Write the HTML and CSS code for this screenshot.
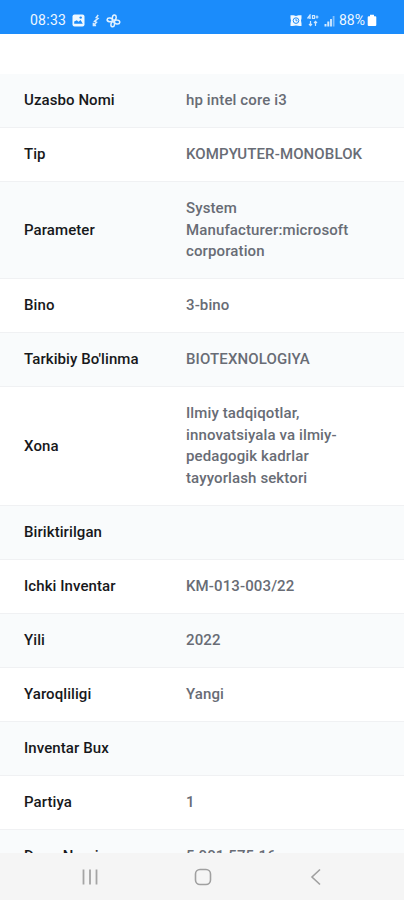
FILE: index.html
```html
<!DOCTYPE html>
<html lang="uz">
<head>
<meta charset="utf-8">
<meta name="viewport" content="width=device-width, initial-scale=1">
<title>Inventar</title>
<link rel="stylesheet" href="styles.css">
</head>
<body>
<div class="screen">
  <header class="status">
    <div class="status-left">
      <span class="clock">08:33</span>
      <svg class="ic-image" width="13" height="13" viewBox="0 0 13 13"><rect x=".5" y=".5" width="12" height="12" rx="2" fill="#eef8ff"/><path d="M2.200 9.800V7.500L4.800 6.200 6.500 7.800 8.500 6 10.800 9.800Z" fill="#1b8cfb"/><circle cx="8.700" cy="3.600" r="1.200" fill="#1b8cfb"/></svg>
      <svg class="ic-bolt" width="8" height="13" viewBox="0 0 8 13"><path d="M6.200 1 4.200 3.600 6 4.400 2.500 7.300 4.500 8.300 1.500 11.500M1.400 8.800v2.800h2.700" fill="none" stroke="#d7ecff" stroke-width="1.500"/></svg>
      <svg class="ic-fan" width="15" height="14" viewBox="0 0 15 14"><g fill="none" stroke="#e3f2ff" stroke-width="1.500" transform="rotate(8 7.500 7)"><ellipse cx="7.800" cy="3.600" rx="1.900" ry="2.600"/><ellipse cx="11.200" cy="7.500" rx="2.700" ry="1.900"/><ellipse cx="7.200" cy="10.400" rx="1.800" ry="2.500"/><ellipse cx="3.700" cy="6.400" rx="2.700" ry="1.800"/></g></svg>
    </div>
    <div class="status-right">
      <svg class="ic-alarm" width="12" height="13" viewBox="0 0 12 13"><path d="M.5 1.200h3L6 2l2.500-.8h3v3L11 6.500l.5 3v2.500h-2L6 11.500l-3.500.5h-2V9.500l.5-3-.5-2.300Z" fill="#f0f8ff"/><circle cx="6" cy="6.600" r="2.800" fill="none" stroke="#1b8cfb"/><path d="M6 4.800v2h1.500" fill="none" stroke="#1b8cfb" stroke-width=".9"/></svg>
      <svg class="ic-lte" width="12" height="13" viewBox="0 0 12 13" fill="none" stroke="#cfe8ff" stroke-width="1.200"><path d="M3 5V1L.8 4h3M5.500 1v4M5.500 1.500h2v3h-2M8.500 3h3M10 1.500v3M3.500 7v4.500M2 10l1.500 1.700L5 10M8.500 12V7.500M7 9l1.500-1.700L10 9"/></svg>
      <svg class="ic-signal" width="11" height="12" viewBox="0 0 11 12"><path d="M.5 9h2v2.500h-2zM3.300 6.500h2v5h-2zM6.100 4h1.800v7.500H6.100z" fill="#d5ebff"/><path d="M8.700 1h1.800v10.500H8.700z" fill="#80bffc"/></svg>
      <span class="percent">88%</span>
      <svg class="ic-battery" width="10" height="13" viewBox="0 0 10 13"><path d="M3 .8h4v1.400h1.300a1 1 0 0 1 1 1V11a1 1 0 0 1-1 1H1.700a1 1 0 0 1-1-1V3.200a1 1 0 0 1 1-1H3Z" fill="#fff"/></svg>
    </div>
  </header>
  <main class="content">
    <dl class="details">
      <div class="row"><dt>Uzasbo Nomi</dt><dd>hp intel core i3</dd></div>
      <div class="row"><dt>Tip</dt><dd>KOMPYUTER-MONOBLOK</dd></div>
      <div class="row"><dt>Parameter</dt><dd>System<br>Manufacturer:microsoft<br>corporation</dd></div>
      <div class="row"><dt>Bino</dt><dd>3-bino</dd></div>
      <div class="row"><dt>Tarkibiy Bo'linma</dt><dd>BIOTEXNOLOGIYA</dd></div>
      <div class="row"><dt>Xona</dt><dd>Ilmiy tadqiqotlar,<br>innovatsiyala va ilmiy-<br>pedagogik kadrlar<br>tayyorlash sektori</dd></div>
      <div class="row"><dt>Biriktirilgan</dt><dd></dd></div>
      <div class="row"><dt>Ichki Inventar</dt><dd>KM-013-003/22</dd></div>
      <div class="row"><dt>Yili</dt><dd>2022</dd></div>
      <div class="row"><dt>Yaroqliligi</dt><dd>Yangi</dd></div>
      <div class="row"><dt>Inventar Bux</dt><dd></dd></div>
      <div class="row"><dt>Partiya</dt><dd>1</dd></div>
      <div class="row"><dt>Dona Narxi</dt><dd>5 001 575.16</dd></div>
    </dl>
  </main>
  <nav class="navbar">
    <svg width="18" height="18" viewBox="0 0 18 18"><path d="M2.500 1.500v15M9 1.500v15M15.500 1.500v15" stroke="#a5a5a5" stroke-width="1.800"/></svg>
    <svg width="18" height="18" viewBox="0 0 18 18"><rect x="1.500" y="1.500" width="15" height="15" rx="4.500" fill="none" stroke="#a0a0a0" stroke-width="1.600"/></svg>
    <svg width="18" height="18" viewBox="0 0 18 18"><path d="M13 1.500 5 9l8 7.500" fill="none" stroke="#a0a0a0" stroke-width="1.600"/></svg>
  </nav>
</div>
</body>
</html>
```
FILE: styles.css
```css
* { box-sizing: border-box; }
body { margin: 0; background: #fff; font-family: Roboto, "Liberation Sans", sans-serif; }
.screen { height: 900px; display: flex; flex-direction: column; overflow: hidden; }

.status {
  flex: none;
  height: 34px;
  padding: 7px 27px 0 30px;
  display: flex;
  justify-content: space-between;
  background: #1b8cfb;
  color: #eef7ff;
  font-size: 14px;
  line-height: 27px;
}
.status-left, .status-right { display: flex; align-items: center; height: 27px; }
.status svg { flex: none; }
.clock { letter-spacing: 0.25px; }
.ic-image { margin-left: 6px; }
.ic-bolt { margin-left: 7px; }
.ic-fan { margin-left: 6px; }
.ic-lte { margin-left: 5px; }
.ic-signal { margin-left: 5px; }
.percent { margin-left: 4px; }
.ic-battery { margin-left: 2px; }

.content { flex: 1; min-height: 0; padding-top: 40px; overflow: hidden; }
.details { margin: 0; }
.row {
  display: grid;
  grid-template-columns: 162px 1fr;
  align-items: center;
  min-height: 53.95px;
  padding: 16px 24px 15.3px;
  border-bottom: 1px solid #f0f1f3;
  font-size: 15px;
  font-weight: 500;
  line-height: 21.65px;
  letter-spacing: 0.12px;
}
.row:nth-child(odd) { background: #f9fbfc; }
.row dt { color: #17181b; letter-spacing: 0.08px; }
.row dd { margin: 0; color: #686c75; white-space: nowrap; }

.navbar {
  flex: none;
  height: 47px;
  padding: 0 79px 0 81px;
  display: flex;
  align-items: center;
  justify-content: space-between;
  background: #f5f5f5;
}
```
